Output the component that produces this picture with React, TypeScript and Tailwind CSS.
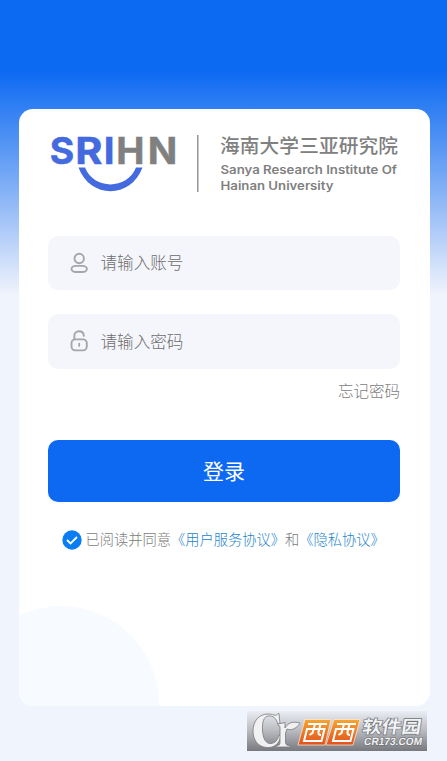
import type { ReactNode } from "react";

const cjk = "font-['Noto_Sans_CJK_SC',sans-serif]";

function Logo() {
  return (
    <svg className="block h-[76px] w-[352px] overflow-visible" viewBox="48 120 352 76" role="img" aria-label="SRIHN">
      <g className="font-['Inter',sans-serif] font-bold" fontSize="37" strokeWidth=".5">
        <g fill="#436ade" stroke="#436ade">
          <text x="49.7" y="163.7" textLength="24.5" lengthAdjust="spacingAndGlyphs">S</text>
          <text x="75.3" y="163.7" textLength="27.2" lengthAdjust="spacingAndGlyphs">R</text>
          <text x="103.8" y="163.7" textLength="10.8" lengthAdjust="spacingAndGlyphs">I</text>
        </g>
        <g fill="#808080" stroke="#808080">
          <text x="116.2" y="163.7" textLength="28.2" lengthAdjust="spacingAndGlyphs">H</text>
          <text x="147.8" y="163.7" textLength="29.5" lengthAdjust="spacingAndGlyphs">N</text>
        </g>
      </g>
      <path d="M78.5 167.5H85C94 190 127 190 136 167.5H142.5C131 199 90 199 78.5 167.5Z" fill="#436ade" />
      <path d="M197.8 135V192" stroke="#858585" strokeWidth="1.3" />
      <text className={`${cjk} font-medium`} x="220" y="152.7" fontSize="19.7" fill="#808080" textLength="178">海南大学三亚研究院</text>
      <g className="font-['Inter',sans-serif] font-semibold" fontSize="11.6" fill="#808080">
        <text x="220.5" y="173.8" textLength="176.5" lengthAdjust="spacingAndGlyphs">Sanya Research Institute Of</text>
        <text x="220.5" y="189.5" textLength="113" lengthAdjust="spacingAndGlyphs">Hainan University</text>
      </g>
    </svg>
  );
}

function UserIcon() {
  return (
    <svg className="h-6 w-[18px]" viewBox="0 0 18 24" fill="none" stroke="#a5a6a9" strokeWidth="1.9">
      <circle cx="9.2" cy="7.5" r="4.7" />
      <rect x="1.5" y="14.9" width="15.4" height="6.1" rx="4.5" ry="3.05" />
    </svg>
  );
}

function LockIcon() {
  return (
    <svg className="h-6 w-[18px]" viewBox="0 0 18 24" fill="none" stroke="#a5a6a9" strokeWidth="1.9" strokeLinecap="round">
      <rect x="1.5" y="10.4" width="15.3" height="11" rx="3.8" />
      <path d="M4.3 10V7C4.3 0.7 13.3 0.7 13.9 6.8M9.2 14.7V16.9" />
    </svg>
  );
}

function Field({ icon, children }: { icon: ReactNode; children: ReactNode }) {
  return (
    <div className="flex h-[54.5px] items-center rounded-[10px] bg-[#f5f6fb] pl-[22px]">
      {icon}
      <span className="mb-px ml-[12.5px] text-[16.6px] font-light leading-6 text-[#6c6c6c]">{children}</span>
    </div>
  );
}

function Watermark() {
  return (
    <svg className="absolute left-[247px] top-[711px] h-10 w-[180px]" viewBox="0 0 180 40">
      <defs>
        <linearGradient id="bar" x2="0" y2="1">
          <stop stopColor="#ebedf4" /><stop offset=".5" stopColor="#b8bac0" /><stop offset="1" stopColor="#77797e" />
        </linearGradient>
        <linearGradient id="orange" x2="0" y2="1">
          <stop stopColor="#f5a632" /><stop offset="1" stopColor="#e44f1d" />
        </linearGradient>
      </defs>
      <path fill="url(#bar)" d="M0 0H180V40H0Z" />
      <g fill="#f1f1f2" stroke="#77797c" strokeWidth=".8" strokeLinejoin="round">
        <path d="M32 2.5L33 13H31C29 7 26 4.5 21 5C17 5.5 15 11 15.5 19C16 28 19 33 24 32.5C28 32 31 29 32 24L34 25C32 33 27 37 20 36.5C11 36 6 29 6 20C6 10 12 3 21 3C26 3 29 6 31 2.5Z" />
        <path d="M31 13L38 11.5V17C41 12 45 10 53 12C50 17 45 20 40 18L38.5 22V31C38.5 34 40 34.5 43 34.5V36H29V34.5C32 34.5 33 34 33 31V17C33 15 32.5 14.5 31 14.5Z" />
      </g>
      <path d="M58 8.5H84L78 34H51Z M87 8.5H113L106 34H79Z" fill="url(#orange)" stroke="#fff0d8" strokeWidth=".7" />
      <g fill="none" stroke="#fff" strokeWidth="2">
        <path d="M61 13H80M60 18H77.5L74.5 30H57Z M68 13L65.5 22L62.5 24M73.5 13L71.5 21Q71 24 74 24" />
        <path d="M90 13H109M89 18H106.5L103.5 30H86Z M97 13L94.5 22L91.5 24M102.5 13L100.5 21Q100 24 103 24" />
      </g>
      <g transform="skewX(-9)" fill="#f1f2f3" stroke="#707378" strokeWidth="1.3" paintOrder="stroke">
        <text className={`${cjk} font-bold`} x="118" y="22.5" fontSize="17.5" textLength="59" lengthAdjust="spacingAndGlyphs">软件园</text>
        <text className="font-['Liberation_Sans',sans-serif] font-bold" x="122" y="34" fontSize="10.5" textLength="58" lengthAdjust="spacingAndGlyphs">CR173.COM</text>
      </g>
    </svg>
  );
}

export default function App() {
  return (
    <div className={`relative h-[761px] w-[447px] overflow-hidden bg-[#f0f4fc] bg-[linear-gradient(to_bottom,#0c69f2_70px,#5595f4_145px,#a8c7f8_225px,#f0f4fc_295px)] px-[19px] pb-14 pt-[109px] ${cjk}`}>
      <main className="relative flex h-[596.5px] w-[411px] flex-col overflow-hidden rounded-[14px] bg-white pl-[29px] pr-[30px] pt-[11px]">
        <div className="absolute -left-[56px] top-[497px] h-[196px] w-[196px] rounded-full bg-[#f7fbff]" />
        <div className="relative flex flex-col">
          <Logo />
          <div className="mt-[39.5px] flex flex-col gap-6">
            <Field icon={<UserIcon />}>请输入账号</Field>
            <Field icon={<LockIcon />}>请输入密码</Field>
          </div>
          <a className="mt-[9.5px] self-end text-[15.5px] font-light leading-6 text-[#7b7b7b]">忘记密码</a>
          <button className="mt-[38px] h-[62px] rounded-[10px] bg-[#0d69f2] pb-px text-[21px] leading-none text-white">登录</button>
          <div className="mt-[24.5px] flex items-center whitespace-nowrap pl-[14px] text-[14.25px] font-light leading-6 text-[#7b7b7b]">
            <svg className="mr-[3.5px] size-5 shrink-0" viewBox="0 0 20 20">
              <circle cx="10" cy="10" r="9.7" fill="#0b7df3" />
              <path d="M5 10L8.5 13.5L15 7" fill="none" stroke="#fff" strokeWidth="1.8" />
            </svg>
            <div className="mb-[2px] flex">
              <span>已阅读并同意</span><span className="text-[#1e84cc]">《用户服务协议》</span><span>和</span><span className="text-[#1e84cc]">《隐私协议》</span>
            </div>
          </div>
        </div>
      </main>
      <Watermark />
    </div>
  );
}
